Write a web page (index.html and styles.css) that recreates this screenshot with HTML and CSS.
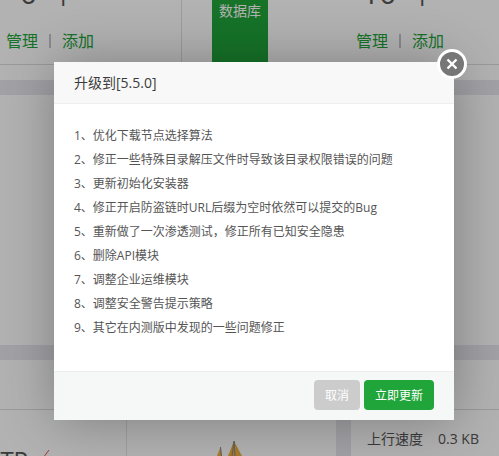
FILE: index.html
```html
<!DOCTYPE html>
<html lang="zh">
<head>
<meta charset="utf-8">
<title>升级到[5.5.0]</title>
<link rel="stylesheet" href="styles.css">
</head>
<body>
<div class="page">
  <section class="top">
    <div class="stat stat-left">
      <div class="num">0<span class="unit">个</span></div>
      <div class="links"><span>管理</span><i></i><span>添加</span></div>
    </div>
    <div class="stat-mid"><div class="db">数据库</div></div>
    <div class="stat stat-right">
      <div class="num">10<span class="unit">个</span></div>
      <div class="links"><span>管理</span><i></i><span>添加</span></div>
    </div>
  </section>
  <div class="strip"></div>
  <div class="blank"></div>
  <div class="strip"></div>
  <div class="panel-head"></div>
  <section class="bottom">
    <div class="cell-ftp"><span class="ftp">FTP</span><svg class="tick" viewBox="0 0 8 8" width="8" height="8"><path d="M1 8L7 0"/></svg></div>
    <div class="cell-chart">
      <svg class="spike" viewBox="0 0 30 15" width="30" height="15"><path class="s1" d="M2 15L5.500 6L6.500 15Z"/><path class="s2" d="M13 15L19 0L27 15Z"/><path class="s3" d="M5.500 6L6.500 15M19 0L17 15M19 0L20 15"/></svg>
    </div>
    <div class="gutter"></div>
    <div class="cell-net"><span>上行速度</span><span>0.3 KB</span></div>
  </section>
</div>
<div class="mask"></div>
<div class="modal">
  <header class="modal-head">升级到[5.5.0]</header>
  <ol class="modal-body">
    <li>1、优化下载节点选择算法</li>
    <li>2、修正一些特殊目录解压文件时导致该目录权限错误的问题</li>
    <li>3、更新初始化安装器</li>
    <li>4、修正开启防盗链时URL后缀为空时依然可以提交的Bug</li>
    <li>5、重新做了一次渗透测试，修正所有已知安全隐患</li>
    <li>6、删除API模块</li>
    <li>7、调整企业运维模块</li>
    <li>8、调整安全警告提示策略</li>
    <li>9、其它在内测版中发现的一些问题修正</li>
  </ol>
  <footer class="modal-foot">
    <button class="btn btn-cancel">取消</button>
    <button class="btn btn-ok">立即更新</button>
  </footer>
  <button class="close" aria-label="关闭">
    <svg viewBox="0 0 14 14" width="14" height="14"><path d="M2.500 2.500L11.500 11.500M11.500 2.500L2.500 11.500"/></svg>
  </button>
</div>
</body>
</html>
```
FILE: styles.css
```css
* { box-sizing: border-box; }
html, body { margin: 0; padding: 0; width: 499px; height: 456px; overflow: hidden; }
body { font-family: "Open Sans", "Noto Sans CJK SC", sans-serif; color: #555; background: #fff; position: relative; }
.page { width: 499px; height: 456px; overflow: hidden; }
.top { display: flex; height: 65px; background: #fff; border-bottom: 1px solid #ddd; }
.stat { display: flex; flex-direction: column; overflow: visible; }
.stat-left { width: 182px; border-right: 1px solid #e0e0e0; padding-left: 6px; }
.stat-mid { width: 174px; padding-left: 30px; }
.stat-right { flex: 1; }
.db { width: 56px; height: 64px; background: #20a53a; color: #fff; font-size: 14px; text-align: center; line-height: 22px; }
.num { height: 30px; margin-top: -12px; padding-left: 14px; font-size: 30px; line-height: 10px; color: #555; white-space: nowrap; }
.stat-right .num { padding-left: 6px; }
.unit { font-size: 24px; margin-left: 14px; }
.links { margin-top: 12px; display: flex; align-items: center; color: #20a53a; font-size: 16px; line-height: 22px; }
.links i { width: 2px; height: 14px; background: #c4c4cc; margin: 0 11px; }
.strip { height: 15px; margin-top: 15px; background: #e8e9ee; }
.blank { height: 250px; margin-bottom: -15px; background: #fff; }
.panel-head { height: 50px; background: #fff; border-bottom: 1px solid #ddd; }
.bottom { display: flex; height: 46px; background: #fff; }
.cell-ftp { width: 127px; border-right: 1px solid #e4e4ee; display: flex; align-items: flex-start; overflow: hidden; }
.ftp { margin: 38px 0 0 -12px; font-size: 24px; line-height: 24px; }
.tick { margin: 40px 0 0 14px; }
.tick path { stroke: #e05050; stroke-width: 1; fill: none; }
.cell-chart { width: 209px; padding-left: 88px; display: flex; align-items: flex-end; }
.spike .s1, .spike .s2 { fill: #f0b040; }
.spike .s3 { stroke: #888; stroke-width: 1; fill: none; }
.gutter { width: 15px; background: #e8e9ee; }
.cell-net { flex: 1; padding: 19px 0 0 16px; display: flex; gap: 15px; font-size: 14px; line-height: 20px; white-space: nowrap; }
.mask { position: absolute; inset: 0; background: rgba(0,0,0,.3); }
.modal { position: absolute; left: 54px; top: 62px; width: 400px; height: 358px; background: #fff; display: flex; flex-direction: column; box-shadow: 1px 1px 50px rgba(0,0,0,.3); }
.modal-head { height: 42px; line-height: 42px; padding-left: 20px; background: #f8f8f8; border-bottom: 1px solid #eee; font-size: 14px; color: #3c3c3c; }
.modal-body { flex: 1; margin: 0; padding: 20px 20px 0; list-style: none; font-size: 12px; line-height: 24px; color: #555; }
.modal-foot { height: 49px; background: #f6f8f8; border-top: 1px solid #eee; padding: 8px 20px 0 0; display: flex; justify-content: flex-end; gap: 4px; align-items: flex-start; }
.btn { height: 30px; border: 0; border-radius: 4px; color: #fff; font: 12px "Open Sans", "Noto Sans CJK SC", sans-serif; padding: 0; }
.btn-cancel { width: 46px; background: #ccc; }
.btn-ok { width: 70px; background: #20a53a; }
.close { position: absolute; left: 383px; top: -13px; width: 30px; height: 30px; padding: 0; border: 3px solid #fff; border-radius: 50%; background: #777; display: flex; align-items: center; justify-content: center; }
.close path { stroke: #fff; stroke-width: 2.4; fill: none; }
```
